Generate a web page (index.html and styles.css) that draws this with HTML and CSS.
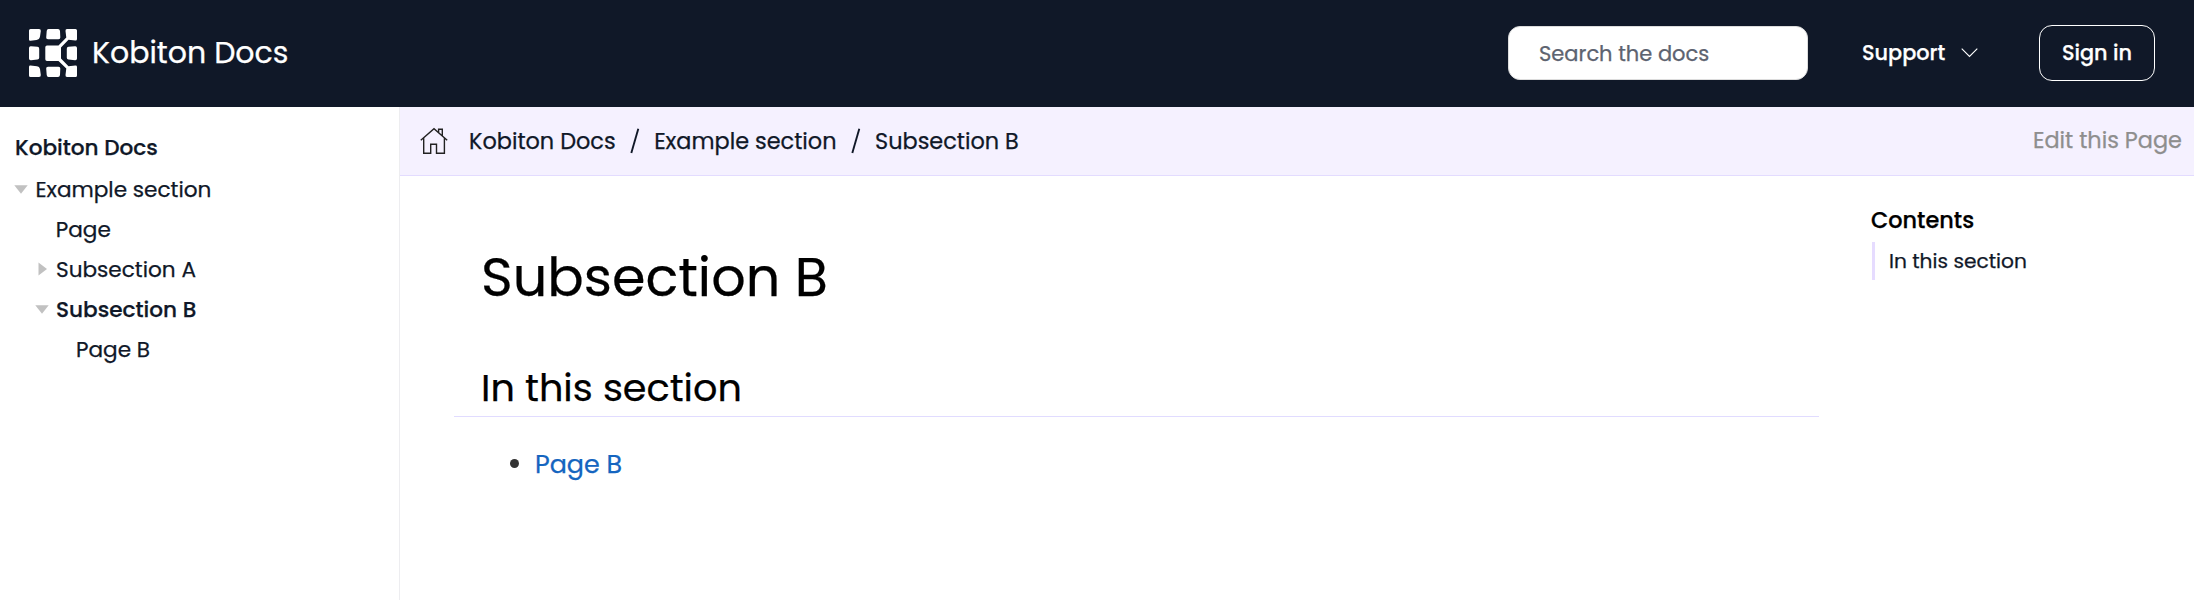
FILE: index.html
```html
<!DOCTYPE html>
<html lang="en">
<head>
<meta charset="utf-8">
<title>Subsection B | Kobiton Docs</title>
<link rel="stylesheet" href="styles.css">
</head>
<body>
<header class="topbar">
  <a class="brand">
    <svg class="logo" width="48" height="48" viewBox="0 0 48 48" fill="#fff">
      <path d="M1.5 0H10Q12 0 11.8 2L11 7.500Q10.500 10.500 7.500 11L1.500 11.800Q0 12 0 10.500V1.500Q0 0 1.500 0Z"/>
      <path d="M19.500 0H29Q30.700 0 31 2L31.300 8.500Q31.400 10.300 29.500 10.300H19Q17 10.300 17.200 8.500L17.700 2Q17.900 0 19.500 0Z"/>
      <path d="M46.500 0H38Q36.300 0 36.500 2L37.300 8.500 29.500 16.500H18Q16.300 16.500 16.300 18.200V30.300Q16.300 32 18 32H29.500L37.300 39.500 36.500 46Q36.300 48 38 48H46.500Q48 48 48 46.500V38Q48 36.400 46.300 36.600L39.500 37.300 32 29.500V18.500L39.500 10.700 46.300 11.500Q48 11.700 48 10V1.500Q48 0 46.500 0Z"/>
      <path d="M2 17.200 8.500 17.800Q10.200 18 10.200 19.700V28.800Q10.200 30.400 8.500 30.600L2 31.200Q0 31.400 0 29.500V19Q0 17 2 17.200Z"/>
      <path d="M46 17.200 39.500 17.800Q37.800 18 37.800 19.700V28.800Q37.800 30.400 39.500 30.600L46 31.200Q48 31.400 48 29.500V19Q48 17 46 17.200Z"/>
      <path d="M1.500 36.600 8 37.300Q10.500 37.600 11 40L11.800 46Q12 48 10 48H1.500Q0 48 0 46.500V38Q0 36.400 1.500 36.600Z"/>
      <path d="M19 37.800H29.500Q31.400 37.800 31.300 39.600L31 46Q30.700 48 29 48H19.500Q17.900 48 17.700 46L17.200 39.600Q17 37.800 19 37.800Z"/>
    </svg>
    <span class="brand-name">Kobiton Docs</span>
  </a>
  <div class="search"><span class="search-hint">Search the docs</span></div>
  <a class="support"><span class="support-label">Support</span>
    <svg width="17" height="10" viewBox="0 0 17 10" fill="none" stroke="#fff" stroke-width="1.100"><path d="M.7.700 8.500 8.500 16.300.700"/></svg>
  </a>
  <a class="signin"><span class="signin-label">Sign in</span></a>
</header>
<div class="body">
  <nav class="sidebar">
    <h3 class="nav-title">Kobiton Docs</h3>
    <div class="row level1"><svg class="caret" width="14" height="9" viewBox="0 0 14 9"><path d="M.3.300H13.700L7 8.700Z"/></svg><span>Example section</span></div>
    <div class="row level2"><span class="leaf">Page</span></div>
    <div class="row level2"><svg class="caret" width="14" height="14" viewBox="0 0 14 14"><path d="M3.500.500V13.500L12 7Z"/></svg><span>Subsection A</span></div>
    <div class="row level2"><svg class="caret" width="14" height="9" viewBox="0 0 14 9"><path d="M.3.300H13.700L7 8.700Z"/></svg><span class="current">Subsection B</span></div>
    <div class="row level3"><span>Page B</span></div>
  </nav>
  <main class="main">
    <div class="toolbar">
      <svg class="home" width="28" height="28" viewBox="0 0 28 28" fill="none" stroke="#222" stroke-width="1.400"><path d="M.8 13.300 14 1.700 27.200 13.300M3.700 11V26.300H10.700V17.300H16.500V26.300H24.400V11M18.600 5.500V2.200H22.300V8.800"/></svg>
      <span class="crumb first">Kobiton Docs</span>
      <svg class="slash" width="10" height="26" viewBox="0 0 10 26"><path d="M8.300.800 1.300 25" stroke="#101828" stroke-width="1.900"/></svg>
      <span class="crumb">Example section</span>
      <svg class="slash" width="10" height="26" viewBox="0 0 10 26"><path d="M8.300.800 1.300 25" stroke="#101828" stroke-width="1.900"/></svg>
      <span class="crumb">Subsection B</span>
      <a class="edit">Edit this Page</a>
    </div>
    <div class="content">
      <article class="doc">
        <h1 class="page-title">Subsection B</h1>
        <h2 class="section-title">In this section</h2>
        <ul class="list"><li class="item"><a class="link">Page B</a></li></ul>
      </article>
      <aside class="toc">
        <h3 class="toc-title">Contents</h3>
        <div class="toc-item"><span class="toc-link">In this section</span></div>
      </aside>
    </div>
  </main>
</div>
</body>
</html>
```
FILE: styles.css
```css
* { box-sizing: border-box; margin: 0; padding: 0; }
body { font-family: Poppins, Inter, "Open Sans", sans-serif; -webkit-text-stroke: 0.25px; color: #101828; background: #fff; height: 600px; overflow: hidden; white-space: nowrap; }
svg { display: block; flex: none; }
.topbar { display: flex; align-items: center; height: 107px; background: #101828; color: #fff; padding: 0 39px 1px 29px; }
.brand { display: flex; align-items: center; gap: 15px; margin-right: auto; }
.brand-name { font-size: 30px; }
.search { display: flex; align-items: center; width: 300px; height: 54px; border: 1px solid #dcdcdc; border-radius: 12px; background: #fff; color: #5d6370; padding-left: 30px; }
.search-hint { font-size: 21px; }
.support { display: flex; align-items: center; width: 116px; margin-left: 54px; justify-content: space-between; font-size: 20.8px; font-weight: 500; }
.support-label, .signin-label { padding-bottom: 2px; }
.signin { display: flex; align-items: center; justify-content: center; width: 116px; height: 56px; border: 1px solid #fff; border-radius: 13px; margin-left: 61px; font-size: 20.8px; font-weight: 500; }
.body { display: flex; height: 493px; }
.sidebar { width: 400px; flex: none; border-right: 1px solid #ededf0; padding-top: 20px; }
.nav-title { font-size: 21.6px; font-weight: 500; line-height: 41px; padding-left: 15px; margin-bottom: 1px; }
.row { display: flex; align-items: center; height: 40px; font-size: 21.6px; }
.caret { fill: #c1c1c1; }
.level1 { padding-left: 14px; gap: 7px; }
.level2 { padding-left: 35px; gap: 7px; }
.level3 { padding-left: 75px; }
.leaf { padding-left: 20px; }
.current { font-weight: 500; }
.level1 span { padding-left: 0.5px; }
.level2 .leaf { padding-left: 20.7px; }
.level3 span { padding-left: 1px; }
.main { flex: 1; min-width: 0; }
.toolbar { display: flex; align-items: center; height: 69px; background: #f5f1ff; border-bottom: 1px solid #e3dcff; padding: 0 12px 0 20px; font-size: 22.4px; }
.first { margin-left: 21px; }
.slash { margin: 0 14px 0 14.5px; }
.edit { margin-left: auto; color: #8e8e8e; padding-bottom: 2px; }
.content { display: flex; }
.doc { width: 1365px; margin-left: 54px; }
.page-title { font-size: 54px; font-weight: 400; line-height: 80px; color: #000; margin-top: 61px; padding-left: 27px; }
.section-title { font-size: 38.2px; font-weight: 400; line-height: 56px; height: 57px; color: #000; margin-top: 43px; padding-left: 27px; border-bottom: 1px solid #e1dcff; }
.list { list-style: none; margin-top: 28px; padding-left: 56px; }
.item { display: flex; align-items: center; gap: 16px; height: 38px; font-size: 25.4px; }
.item::before { content: ""; width: 9px; height: 9px; border-radius: 50%; background: #333; margin-bottom: 2px; }
.link { color: #1565c0; }
.toc { margin-left: 53px; padding-top: 24px; }
.toc-title { font-size: 22.4px; font-weight: 500; line-height: 41px; color: #000; margin-bottom: 1px; margin-left: -1px; }
.toc-item { display: flex; align-items: center; height: 38px; border-left: 3px solid #e6dcff; padding-left: 14px; font-size: 20.2px; }
```
